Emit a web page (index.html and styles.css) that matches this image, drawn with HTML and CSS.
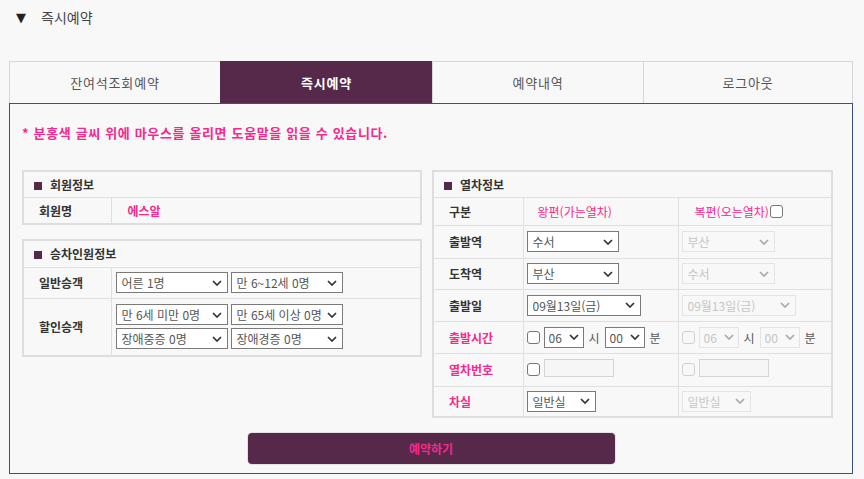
FILE: index.html
```html
<!DOCTYPE html>
<html lang="ko">
<head>
<meta charset="utf-8">
<title>즉시예약</title>
<link rel="stylesheet" href="styles.css">
</head>
<body>
<div class="page">
  <h2 class="title"><span class="tri">▼</span>즉시예약</h2>
  <div class="wrap">
    <nav class="tabs">
      <a class="tab">잔여석조회예약</a>
      <a class="tab active">즉시예약</a>
      <a class="tab">예약내역</a>
      <a class="tab">로그아웃</a>
    </nav>
    <section class="content">
      <p class="note">* 분홍색 글씨 위에 마우스를 올리면 도움말을 읽을 수 있습니다.</p>
      <div class="cols">
        <div class="col-left">
          <table class="tbl member">
            <colgroup><col class="c88"><col></colgroup>
            <tr class="h26"><th colspan="2" class="sect"><span class="sq"></span>회원정보</th></tr>
            <tr class="h27"><td class="lbl">회원명</td><td class="val"><span class="pink-b">에스알</span></td></tr>
          </table>
          <table class="tbl pax">
            <colgroup><col class="c88"><col></colgroup>
            <tr class="h27"><th colspan="2" class="sect"><span class="sq"></span>승차인원정보</th></tr>
            <tr class="h31">
              <td class="lbl">일반승객</td>
              <td class="val">
                <div class="selrow">
                  <label class="sel w112"><select><option>어른 1명</option></select><svg class="chev" width="10" height="6" viewBox="0 0 10 6"><path d="M1 1l4 4 4-4" fill="none" stroke="#333" stroke-width="1.7"/></svg></label>
                  <label class="sel w112"><select><option>만 6~12세 0명</option></select><svg class="chev" width="10" height="6" viewBox="0 0 10 6"><path d="M1 1l4 4 4-4" fill="none" stroke="#333" stroke-width="1.7"/></svg></label>
                </div>
              </td>
            </tr>
            <tr class="h58">
              <td class="lbl">할인승객</td>
              <td class="val">
                <div class="selrow">
                  <label class="sel w112"><select><option>만 6세 미만 0명</option></select><svg class="chev" width="10" height="6" viewBox="0 0 10 6"><path d="M1 1l4 4 4-4" fill="none" stroke="#333" stroke-width="1.7"/></svg></label>
                  <label class="sel w112"><select><option>만 65세 이상 0명</option></select><svg class="chev" width="10" height="6" viewBox="0 0 10 6"><path d="M1 1l4 4 4-4" fill="none" stroke="#333" stroke-width="1.7"/></svg></label>
                </div>
                <div class="selrow">
                  <label class="sel w112"><select><option>장애중증 0명</option></select><svg class="chev" width="10" height="6" viewBox="0 0 10 6"><path d="M1 1l4 4 4-4" fill="none" stroke="#333" stroke-width="1.7"/></svg></label>
                  <label class="sel w112"><select><option>장애경증 0명</option></select><svg class="chev" width="10" height="6" viewBox="0 0 10 6"><path d="M1 1l4 4 4-4" fill="none" stroke="#333" stroke-width="1.7"/></svg></label>
                </div>
              </td>
            </tr>
          </table>
        </div>
        <div class="col-right">
          <table class="tbl train">
            <colgroup><col class="c90"><col class="c155"><col></colgroup>
            <tr class="h26"><th colspan="3" class="sect"><span class="sq"></span>열차정보</th></tr>
            <tr class="h28">
              <td class="lbl">구분</td>
              <td class="hd"><span class="pink">왕편(가는열차)</span></td>
              <td class="hd hd2"><span class="pink">복편(오는열차)</span><input type="checkbox" class="cb cb-inline"></td>
            </tr>
            <tr class="h33">
              <td class="lbl">출발역</td>
              <td class="val"><label class="sel w92"><select><option>수서</option></select><svg class="chev" width="10" height="6" viewBox="0 0 10 6"><path d="M1 1l4 4 4-4" fill="none" stroke="#333" stroke-width="1.7"/></svg></label></td>
              <td class="val"><label class="sel w93 dis"><select disabled><option>부산</option></select><svg class="chev" width="10" height="6" viewBox="0 0 10 6"><path d="M1 1l4 4 4-4" fill="none" stroke="#aaa" stroke-width="1.7"/></svg></label></td>
            </tr>
            <tr class="h31">
              <td class="lbl">도착역</td>
              <td class="val"><label class="sel w92"><select><option>부산</option></select><svg class="chev" width="10" height="6" viewBox="0 0 10 6"><path d="M1 1l4 4 4-4" fill="none" stroke="#333" stroke-width="1.7"/></svg></label></td>
              <td class="val"><label class="sel w93 dis"><select disabled><option>수서</option></select><svg class="chev" width="10" height="6" viewBox="0 0 10 6"><path d="M1 1l4 4 4-4" fill="none" stroke="#aaa" stroke-width="1.7"/></svg></label></td>
            </tr>
            <tr class="h32">
              <td class="lbl">출발일</td>
              <td class="val"><label class="sel w114"><select><option>09월13일(금)</option></select><svg class="chev" width="10" height="6" viewBox="0 0 10 6"><path d="M1 1l4 4 4-4" fill="none" stroke="#333" stroke-width="1.7"/></svg></label></td>
              <td class="val"><label class="sel w114 dis"><select disabled><option>09월13일(금)</option></select><svg class="chev" width="10" height="6" viewBox="0 0 10 6"><path d="M1 1l4 4 4-4" fill="none" stroke="#aaa" stroke-width="1.7"/></svg></label></td>
            </tr>
            <tr class="h32">
              <td class="lbl pink-b">출발시간</td>
              <td class="val">
                <div class="timerow">
                  <input type="checkbox" class="cb">
                  <label class="sel w40"><select><option>06</option></select><svg class="chev" width="10" height="6" viewBox="0 0 10 6"><path d="M1 1l4 4 4-4" fill="none" stroke="#333" stroke-width="1.7"/></svg></label>
                  <span class="unit">시</span>
                  <label class="sel w40"><select><option>00</option></select><svg class="chev" width="10" height="6" viewBox="0 0 10 6"><path d="M1 1l4 4 4-4" fill="none" stroke="#333" stroke-width="1.7"/></svg></label>
                  <span class="unit">분</span>
                </div>
              </td>
              <td class="val">
                <div class="timerow">
                  <input type="checkbox" class="cb" disabled>
                  <label class="sel w40 dis"><select disabled><option>06</option></select><svg class="chev" width="10" height="6" viewBox="0 0 10 6"><path d="M1 1l4 4 4-4" fill="none" stroke="#aaa" stroke-width="1.7"/></svg></label>
                  <span class="unit">시</span>
                  <label class="sel w40 dis"><select disabled><option>00</option></select><svg class="chev" width="10" height="6" viewBox="0 0 10 6"><path d="M1 1l4 4 4-4" fill="none" stroke="#aaa" stroke-width="1.7"/></svg></label>
                  <span class="unit">분</span>
                </div>
              </td>
            </tr>
            <tr class="h33">
              <td class="lbl pink-b">열차번호</td>
              <td class="val"><div class="timerow"><input type="checkbox" class="cb"><input type="text" class="txt" disabled></div></td>
              <td class="val"><div class="timerow"><input type="checkbox" class="cb" disabled><input type="text" class="txt" disabled></div></td>
            </tr>
            <tr class="h31">
              <td class="lbl pink-b">차실</td>
              <td class="val"><label class="sel w69"><select><option>일반실</option></select><svg class="chev" width="10" height="6" viewBox="0 0 10 6"><path d="M1 1l4 4 4-4" fill="none" stroke="#333" stroke-width="1.7"/></svg></label></td>
              <td class="val"><label class="sel w69 dis"><select disabled><option>일반실</option></select><svg class="chev" width="10" height="6" viewBox="0 0 10 6"><path d="M1 1l4 4 4-4" fill="none" stroke="#aaa" stroke-width="1.7"/></svg></label></td>
            </tr>
          </table>
        </div>
      </div>
      <div class="actions"><button class="btn" type="button">예약하기</button></div>
    </section>
  </div>
</div>
</body>
</html>
```

FILE: styles.css
```css
html, body {
  margin: 0;
  padding: 0;
  background: #f8f8f8;
}
body {
  font-family: "Noto Sans CJK KR", "Noto Sans", sans-serif;
  color: #333;
  font-size: 12px;
}
.page {
  width: 864px;
  height: 479px;
  overflow: hidden;
}
.title {
  margin: 0 0 26px 0;
  height: 35px;
  line-height: 35px;
  padding-left: 16px;
  font-size: 14px;
  font-weight: normal;
  color: #444;
  display: flex;
  align-items: center;
}
.tri {
  font-family: "DejaVu Sans", sans-serif;
  font-size: 13px;
  color: #222;
  width: 25px;
}
.wrap {
  margin-left: 9px;
  width: 844px;
}
.tabs {
  display: grid;
  grid-template-columns: 211px 212px 211px 210px;
  height: 42px;
}
.tab {
  display: flex;
  align-items: center;
  justify-content: center;
  border: 1px solid #d6d6d6;
  border-bottom: none;
  border-right: none;
  font-size: 13px;
  color: #555;
  letter-spacing: 0.8px;
}
.tab:last-child {
  border-right: 1px solid #d6d6d6;
}
.tab.active {
  background: #56294a;
  border-color: #56294a;
  color: #fff;
  font-weight: bold;
}
.content {
  border: 1px solid #3b5180;
  height: 371px;
  box-sizing: border-box;
  padding: 20px 0 0 0;
}
.note {
  margin: 0 0 0 12px;
  height: 18px;
  line-height: 18px;
  color: #f7288e;
  font-weight: bold;
  font-size: 13px;
  letter-spacing: 0.65px;
}
.cols {
  display: flex;
  gap: 10px;
  margin: 28px 0 0 12px;
  align-items: flex-start;
}
.col-left {
  width: 400px;
  display: flex;
  flex-direction: column;
  gap: 14px;
}
.col-right {
  width: 401px;
}
.tbl {
  width: 100%;
  table-layout: fixed;
  border-collapse: collapse;
  border: 2px solid #dedede;
}
.tbl th, .tbl td {
  border: 1px solid #e0e0e0;
  padding: 0;
  text-align: left;
  vertical-align: middle;
}
.c88 { width: 88px; }
.c90 { width: 90px; }
.c155 { width: 155px; }
.h26 { height: 26px; }
.h27 { height: 27px; }
.h28 { height: 28px; }
.h31 { height: 31px; }
.h32 { height: 32px; }
.h33 { height: 33px; }
.h58 { height: 58px; }
.sect {
  font-weight: bold;
  font-size: 12px;
  color: #333;
  padding-left: 10px !important;
}
.sq {
  display: inline-block;
  width: 8px;
  height: 8px;
  background: #56294a;
  margin-right: 8px;
  vertical-align: 0;
}
.lbl {
  font-weight: bold;
  padding-left: 15px !important;
  color: #333;
}
.val {
  padding-left: 4px !important;
}
.train .val {
  padding-left: 3px !important;
}
.pink { color: #f7288e; }
.pink-b { color: #f7288e; font-weight: bold; }
.lbl.pink-b { color: #f7288e; }
.member .val { padding-left: 16px !important; }
.hd { padding-left: 14px !important; }
.hd2 { padding-left: 16px !important; }
.selrow {
  display: flex;
  gap: 3px;
  margin: 3px 0;
}
.sel {
  position: relative;
  display: inline-block;
  height: 21px;
  vertical-align: middle;
}
.sel select {
  appearance: none;
  -webkit-appearance: none;
  box-sizing: border-box;
  width: 100%;
  height: 100%;
  margin: 0;
  border: 1px solid #7a7a7a;
  border-radius: 0;
  background: #fff;
  font-family: "Noto Sans CJK KR", "Noto Sans", sans-serif;
  font-size: 12px;
  color: #555;
  padding: 0 18px 0 5px;
  outline: none;
}
.sel.dis select {
  border-color: #dcdcdc;
  background: #f8f8f8;
  color: #b0b0b0;
}
.sel .chev {
  position: absolute;
  right: 6px;
  top: 50%;
  margin-top: -3px;
  pointer-events: none;
}
.w40 { width: 40px; }
.w69 { width: 69px; }
.w92 { width: 92px; }
.w93 { width: 93px; }
.w112 { width: 112px; }
.w114 { width: 114px; }
.w40 select { padding: 0 14px 0 4px; }
.w40 .chev { right: 5px; }
.timerow {
  display: flex;
  align-items: center;
  gap: 4px;
}
.cb {
  appearance: none;
  -webkit-appearance: none;
  width: 13px;
  height: 13px;
  margin: 0;
  border: 1px solid #777;
  border-radius: 3px;
  background: #fff;
  box-sizing: border-box;
}
.cb:disabled {
  border-color: #d0d0d0;
  background: #f8f8f8;
}
.cb-inline {
  vertical-align: -1px;
  margin-left: 1px;
}
.unit {
  color: #555;
  font-size: 12px;
  margin: 0 1px;
}
.txt {
  box-sizing: border-box;
  width: 70px;
  height: 18px;
  margin: 0 0 3px 0;
  border: 1px solid #d4d4d4;
  background: #f6f6f6;
  padding: 0;
}
.actions {
  display: flex;
  justify-content: center;
  margin-top: 15px;
}
.btn {
  width: 367px;
  height: 31px;
  border: none;
  border-radius: 4px;
  background: #56294a;
  color: #f7288e;
  font-family: "Noto Sans CJK KR", "Noto Sans", sans-serif;
  font-weight: bold;
  font-size: 12px;
  box-shadow: 0 0 0 1px #e6e0e4;
}
```
